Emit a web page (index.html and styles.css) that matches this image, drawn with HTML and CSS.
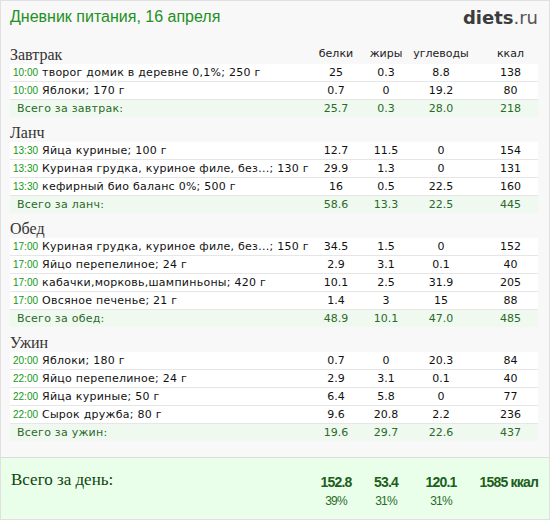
FILE: index.html
```html
<!DOCTYPE html>
<html lang="ru">
<head>
<meta charset="utf-8">
<title>Дневник питания</title>
<link rel="stylesheet" href="styles.css">
</head>
<body>
<div class="page">
  <header class="top">
    <h1 class="title">Дневник питания, 16 апреля</h1>
    <div class="logo"><b>diets</b>.ru</div>
  </header>

  <section class="meal first">
    <div class="meal-head"><span class="meal-name">Завтрак</span><span class="c">белки</span><span class="c">жиры</span><span class="c">углеводы</span><span class="c k">ккал</span></div>
    <div class="row"><span class="name"><span class="time">10:00</span>творог домик в деревне 0,1%; 250 г</span><span class="c">25</span><span class="c">0.3</span><span class="c">8.8</span><span class="c k">138</span></div>
    <div class="row"><span class="name"><span class="time">10:00</span>Яблоки; 170 г</span><span class="c">0.7</span><span class="c">0</span><span class="c">19.2</span><span class="c k">80</span></div>
    <div class="row total"><span class="name">Всего за завтрак:</span><span class="c">25.7</span><span class="c">0.3</span><span class="c">28.0</span><span class="c k">218</span></div>
  </section>

  <section class="meal">
    <div class="meal-head"><span class="meal-name">Ланч</span></div>
    <div class="row"><span class="name"><span class="time">13:30</span>Яйца куриные; 100 г</span><span class="c">12.7</span><span class="c">11.5</span><span class="c">0</span><span class="c k">154</span></div>
    <div class="row"><span class="name"><span class="time">13:30</span>Куриная грудка, куриное филе, без...; 130 г</span><span class="c">29.9</span><span class="c">1.3</span><span class="c">0</span><span class="c k">131</span></div>
    <div class="row"><span class="name"><span class="time">13:30</span>кефирный био баланс 0%; 500 г</span><span class="c">16</span><span class="c">0.5</span><span class="c">22.5</span><span class="c k">160</span></div>
    <div class="row total"><span class="name">Всего за ланч:</span><span class="c">58.6</span><span class="c">13.3</span><span class="c">22.5</span><span class="c k">445</span></div>
  </section>

  <section class="meal">
    <div class="meal-head"><span class="meal-name">Обед</span></div>
    <div class="row"><span class="name"><span class="time">17:00</span>Куриная грудка, куриное филе, без...; 150 г</span><span class="c">34.5</span><span class="c">1.5</span><span class="c">0</span><span class="c k">152</span></div>
    <div class="row"><span class="name"><span class="time">17:00</span>Яйцо перепелиное; 24 г</span><span class="c">2.9</span><span class="c">3.1</span><span class="c">0.1</span><span class="c k">40</span></div>
    <div class="row"><span class="name"><span class="time">17:00</span>кабачки,морковь,шампиньоны; 420 г</span><span class="c">10.1</span><span class="c">2.5</span><span class="c">31.9</span><span class="c k">205</span></div>
    <div class="row"><span class="name"><span class="time">17:00</span>Овсяное печенье; 21 г</span><span class="c">1.4</span><span class="c">3</span><span class="c">15</span><span class="c k">88</span></div>
    <div class="row total"><span class="name">Всего за обед:</span><span class="c">48.9</span><span class="c">10.1</span><span class="c">47.0</span><span class="c k">485</span></div>
  </section>

  <section class="meal">
    <div class="meal-head"><span class="meal-name">Ужин</span></div>
    <div class="row"><span class="name"><span class="time">20:00</span>Яблоки; 180 г</span><span class="c">0.7</span><span class="c">0</span><span class="c">20.3</span><span class="c k">84</span></div>
    <div class="row"><span class="name"><span class="time">22:00</span>Яйцо перепелиное; 24 г</span><span class="c">2.9</span><span class="c">3.1</span><span class="c">0.1</span><span class="c k">40</span></div>
    <div class="row"><span class="name"><span class="time">22:00</span>Яйца куриные; 50 г</span><span class="c">6.4</span><span class="c">5.8</span><span class="c">0</span><span class="c k">77</span></div>
    <div class="row"><span class="name"><span class="time">22:00</span>Сырок дружба; 80 г</span><span class="c">9.6</span><span class="c">20.8</span><span class="c">2.2</span><span class="c k">236</span></div>
    <div class="row total"><span class="name">Всего за ужин:</span><span class="c">19.6</span><span class="c">29.7</span><span class="c">22.6</span><span class="c k">437</span></div>
  </section>

  <footer class="day">
    <div class="day-row">
      <span class="day-label">Всего за день:</span>
      <span class="c">152.8</span><span class="c">53.4</span><span class="c">120.1</span><span class="c kk">1585 ккал</span>
    </div>
    <div class="day-row pct">
      <span></span>
      <span class="c">39%</span><span class="c">31%</span><span class="c">31%</span><span class="c kk"></span>
    </div>
  </footer>
</div>
</body>
</html>
```

FILE: styles.css
```css
* { box-sizing: border-box; }

html, body {
  margin: 0;
  padding: 0;
  background: #ffffff;
}

.page {
  width: 550px;
  height: 520px;
  border: 1px solid #e0e0e0;
  background: #f8f8f8;
  display: flex;
  flex-direction: column;
  font-family: "DejaVu Sans", Verdana, sans-serif;
  font-size: 11px;
  color: #111;
}

.top {
  display: flex;
  justify-content: space-between;
  align-items: flex-start;
  height: 40px;
  padding: 6px 11px 0 9px;
}

.title {
  margin: 0;
  font-family: "Liberation Sans", Arial, sans-serif;
  font-weight: normal;
  font-size: 16px;
  line-height: 20px;
  color: #239023;
}

.logo {
  font-family: "DejaVu Sans", Verdana, sans-serif;
  font-size: 18px;
  line-height: 20px;
  color: #555;
  padding-top: 1px;
}

.logo b {
  color: #3c3c3c;
  font-weight: bold;
}

.meal {
  padding: 0 11px 0 9px;
}

.meal-head,
.row,
.day-row {
  display: grid;
  grid-template-columns: 1fr 50px 50px 60px 67px;
}

.meal-head {
  height: 25px;
  align-items: end;
  padding-bottom: 1px;
  line-height: 16px;
  color: #222;
}

.meal-head .c {
  position: relative;
  top: -1px;
}

.meal.first .meal-head {
  height: 23px;
}

.meal-name {
  font-family: "Liberation Serif", "Times New Roman", serif;
  font-size: 16px;
  color: #333;
  line-height: 16px;
}

.c {
  text-align: center;
}

.k {
  padding-left: 12px;
}

.row {
  height: 18px;
  line-height: 17px;
  background: #ffffff;
  border-bottom: 1px solid #e6e6e6;
  white-space: nowrap;
}

.row .name {
  overflow: hidden;
  letter-spacing: 0.25px;
}

.time {
  display: inline-block;
  width: 32px;
  padding-left: 3px;
  font-family: "Liberation Sans", Arial, sans-serif;
  font-size: 10px;
  letter-spacing: 0;
  color: #119911;
}

.total {
  height: 17px;
  border-bottom: none;
  background: #f0f9f0;
  color: #2a6a2a;
}

.total .name {
  padding-left: 7px;
}

.day {
  margin-top: auto;
  height: 62px;
  border-top: 1px solid #dcdcdc;
  background: #eaffea;
  padding: 13px 11px 0 9px;
}

.day-row {
  font-family: "Liberation Sans", Arial, sans-serif;
  font-size: 14px;
  font-weight: bold;
  line-height: 22px;
  letter-spacing: -0.8px;
  color: #1d5e1d;
  align-items: start;
}

.day-label {
  font-family: "Liberation Serif", "Times New Roman", serif;
  font-weight: normal;
  font-size: 17px;
  line-height: 18px;
  letter-spacing: 0;
  color: #0e440e;
  padding-left: 1px;
}

.kk {
  text-align: right;
  white-space: nowrap;
}

.day-row.pct {
  font-size: 12px;
  font-weight: normal;
  line-height: 17px;
  letter-spacing: -0.9px;
  color: #2a6a2a;
}
```
